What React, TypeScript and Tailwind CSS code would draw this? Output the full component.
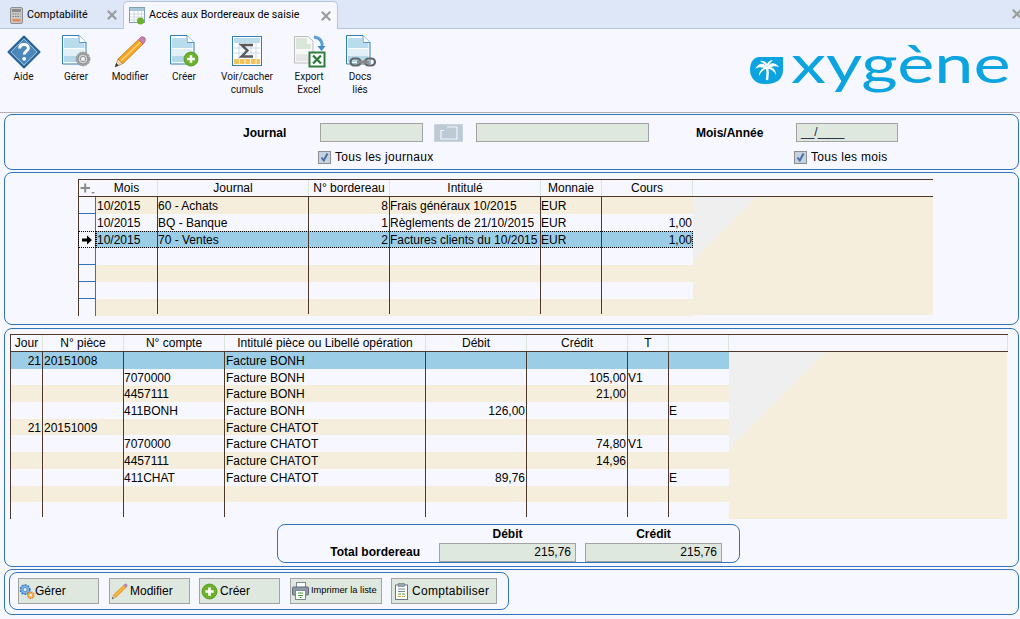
import React from "react";

const Doc = () => (
  <g>
    <path d="M3.5 .5H20L27 7.5V29H3.5Z" fill="#fdfeff" stroke="#2f7fb5" />
    <path d="M20 .5V7.5H27" fill="#fff" stroke="#2f7fb5" strokeWidth=".8" />
    <rect x="5" y="3" width="14" height="5" fill="#b8dcec" />
    <rect x="5" y="8" width="20.5" height="5" fill="#b8dcec" />
    <rect x="5" y="14" width="20.5" height="7" fill="#e3f0f7" />
    <rect x="5" y="21" width="20.5" height="6" fill="#b3d8ea" />
  </g>
);

const Plus = ({ cx, cy, r }: { cx: number; cy: number; r: number }) => (
  <g>
    <circle cx={cx} cy={cy} r={r} fill="#6cb12a" stroke="#4d8f1c" strokeWidth=".8" />
    <path d={`M${cx - r * 0.55} ${cy}H${cx + r * 0.55}M${cx} ${cy - r * 0.55}V${cy + r * 0.55}`} stroke="#fff" strokeWidth={r * 0.36} />
  </g>
);

const Ic = ({ children }: { children: React.ReactNode }) => (
  <svg width="34" height="34" viewBox="0 0 34 34" className="block">
    {children}
  </svg>
);

const HelpIcon = () => (
  <Ic>
    <path d="M17 1.5L32.5 17L17 32.5L1.5 17Z" fill="#4d86b9" stroke="#2a6596" strokeWidth="2" strokeLinejoin="round" />
    <path d="M17 4L30 17L17 30L4 17Z" fill="none" stroke="#a8cbe4" strokeWidth=".8" />
    <path d="M12.6 13.5C12.8 10.8 14.6 9.5 17 9.5C19.6 9.5 21.4 11 21.4 13.2C21.4 16.2 17.2 16.2 17.2 19.6" fill="none" stroke="#fff" strokeWidth="3" />
    <circle cx="17.2" cy="23.8" r="1.9" fill="#fff" />
  </Ic>
);

const Gear = ({ cx, cy, r }: { cx: number; cy: number; r: number }) => (
  <g>
    <circle cx={cx} cy={cy} r={r} fill="#a8a8a8" stroke="#777" strokeWidth=".6" strokeDasharray="2 1.2" />
    <circle cx={cx} cy={cy} r={r * 0.72} fill="#d0d0d0" stroke="#777" strokeWidth=".8" />
    <circle cx={cx} cy={cy} r={r * 0.36} fill="#f7f8ff" stroke="#777" strokeWidth=".8" />
  </g>
);

const GearDocIcon = () => (
  <Ic>
    <Doc />
    <Gear cx={24} cy={24} r={7} />
  </Ic>
);

const PencilGlyph = () => (
  <g>
    <path d="M2 32L5 24L10 28.5Z" fill="#f0d9a8" stroke="#8a6a3a" strokeWidth=".6" />
    <path d="M2 32L3.2 28L5.8 30.4Z" fill="#3b3b3b" />
    <path d="M5 24L25.500 4.500L30 9L10 28.5Z" fill="#f6a821" stroke="#b87412" strokeWidth=".8" />
    <path d="M7.800 26L27.800 6.700" stroke="#ffd27a" strokeWidth="1.400" />
    <path d="M25.500 4.500L28 2Q30 1 32 3Q33 5 31.500 7.500L30 9Z" fill="#c97fb3" stroke="#96608a" strokeWidth=".7" />
  </g>
);

const PencilIcon = () => (
  <Ic>
    <PencilGlyph />
  </Ic>
);

const CreateIcon = () => (
  <Ic>
    <Doc />
    <Plus cx={24} cy={24} r={7} />
  </Ic>
);

const SigmaIcon = () => (
  <Ic>
    <rect x="2.5" y="1.5" width="29" height="29" fill="#fff" stroke="#2f7fb5" />
    <rect x="4" y="3" width="26" height="5" fill="#bcdcec" />
    <path d="M4 13H30M4 18H30M9 8V24M15 8V24M21 8V24M26 8V24" stroke="#c4d8ea" strokeWidth="1" />
    <rect x="4" y="24" width="26" height="5" fill="#f6c25a" />
    <path d="M9.5 24V29M15 24V29M20.5 24V29M26 24V29" stroke="#fff" strokeWidth=".8" />
    <path d="M23 10H11.5L17.5 15.5L11.5 21.5H23" fill="none" stroke="#5a5a5a" strokeWidth="2.4" />
  </Ic>
);

const ExcelIcon = () => (
  <Ic>
    <path d="M2.5 1.5H16L21 6V28H2.5Z" fill="#f8f8f8" stroke="#bdbdbd" />
    <rect x="4" y="3" width="11" height="6" fill="#dbe6da" />
    <rect x="4" y="9" width="15" height="5" fill="#dbe6da" />
    <rect x="4" y="19" width="13" height="7" fill="#e6e6e6" />
    <path d="M22 2C29 3 31 8 30 12" fill="none" stroke="#5a9fd4" strokeWidth="3" />
    <path d="M25.5 11H33.5L29.5 16Z" fill="#3d8cc9" />
    <rect x="17.5" y="17.5" width="15" height="14" fill="#fff" stroke="#2f7d3c" strokeWidth="2" />
    <path d="M21 20.5L29 28.5M29 20.5L21 28.5" stroke="#2f7d3c" strokeWidth="2.4" />
  </Ic>
);

const ChainIcon = () => (
  <Ic>
    <Doc />
    <g fill="none">
      <rect x="7.5" y="23.5" width="10" height="7" rx="3.5" stroke="#666" strokeWidth="2.2" />
      <rect x="22" y="23.5" width="10" height="7" rx="3.5" stroke="#666" strokeWidth="2.2" />
      <path d="M14 27H26" stroke="#888" strokeWidth="3" />
    </g>
  </Ic>
);

const ToolItem = ({ w, icon, lines }: { w: string; icon: React.ReactNode; lines: string[] }) => (
  <div className={`${w} flex flex-col items-center`}>
    <div className="h-[35px]">{icon}</div>
    {lines.map((l) => (
      <div key={l} className="h-[13px] text-[10px] leading-[13px] whitespace-nowrap text-[#111111]">
        {l}
      </div>
    ))}
  </div>
);

const Close = () => (
  <svg width="10" height="10" viewBox="0 0 10 10" className="block shrink-0">
    <path d="M.8 .8L9.2 9.2M9.2 .8L.8 9.2" stroke="#9b9b9b" strokeWidth="2.2" />
  </svg>
);

const Logo = () => (
  <svg width="262" height="56" viewBox="0 0 262 56" className="block">
    <path d="M9 15H33V28C33 37 26 42 17 42H14C6 42 0 36 0 28C0 20 4 15 9 15Z" fill="#0ba3e0" />
    <path d="M17 38C18 33 18 29 17 25" stroke="#fff" strokeWidth="2.4" fill="none" />
    <path d="M17 25C13 20 9 21 5 27C8 25 11 25 14 26C11 27 9 30 9 34C11 30 13 28 16.500 26.500Z" fill="#fff" />
    <path d="M17 25C20 20 25 20 29 25C26 24 23 24 21 25.500C24 26 26 29 26 33C24 29 21 27 17.500 26.500Z" fill="#fff" />
    <path d="M17 25C15 22 13 21 10 19C13 18 16 20 17 22C18 20 20 18 23 18C21 20 19 22 17 25Z" fill="#fff" />
    <text transform="translate(41 41) scale(1.35 1)" fontFamily="Lato, 'Liberation Sans', sans-serif" fontSize="52" fill="#0ba3e0">
      xygène
    </text>
  </svg>
);

const Check = () => (
  <div className="w-[13px] h-[13px] border border-[#8f8f8f] bg-[#c6d2e0] shrink-0 flex items-center justify-center">
    <svg width="11" height="11" viewBox="0 0 11 11" className="block">
      <path d="M2.500 5.500L4.800 8.500L8.500 1.500" fill="none" stroke="#4a6fa5" strokeWidth="2" />
    </svg>
  </div>
);

const Field = ({ w, children }: { w: string; children?: React.ReactNode }) => (
  <div className={`${w} h-[19px] border border-[#a3a3a3] bg-[#dfe8df] text-[12px] leading-[17px] px-[4px] whitespace-nowrap`}>{children}</div>
);

type Col = { w: string; align?: "r"; tight?: boolean };

const Cell = ({ col, text, short, sep, first }: { col: Col; text?: string; short: boolean; sep: boolean; first?: boolean }) => (
  <div className={`${col.w} shrink-0 flex items-start h-full`}>
    {first && <div className="w-px bg-[#4d392c] shrink-0 h-full" />}
    <span className={`flex-1 min-w-0 pt-[1px] overflow-hidden whitespace-nowrap ${col.align === "r" ? "text-right pr-[1px]" : col.tight ? "text-left" : "text-left pl-[1px]"}`}>{text}</span>
    {sep && <div className={`w-px bg-[#4d392c] shrink-0 ${short ? "h-[15px]" : "h-full"}`} />}
  </div>
);

const HeadCell = ({ w, label, sep = true }: { w: string; label: string; sep?: boolean }) => (
  <div className={`${w} shrink-0 flex h-full`}>
    <span className="flex-1 min-w-0 text-center whitespace-nowrap">{label}</span>
    {sep && <div className="w-px bg-[#dbe6dc] h-full shrink-0" />}
  </div>
);

const cols1: Col[] = [
  { w: "w-[62px]" },
  { w: "w-[151px]", tight: true },
  { w: "w-[81px]", align: "r" },
  { w: "w-[151px]", tight: true },
  { w: "w-[61px]", tight: true },
  { w: "w-[91px]", align: "r" },
];
const heads1 = ["Mois", "Journal", "N° bordereau", "Intitulé", "Monnaie", "Cours"];
const rows1: string[][] = [
  ["10/2015", "60 - Achats", "8", "Frais généraux 10/2015", "EUR", ""],
  ["10/2015", "BQ - Banque", "1", "Règlements de 21/10/2015", "EUR", "1,00"],
  ["10/2015", "70 - Ventes", "2", "Factures clients du 10/2015", "EUR", "1,00"],
  [],
  [],
  [],
  [],
];

const cols2: Col[] = [
  { w: "w-[33px]", align: "r" },
  { w: "w-[81px]" },
  { w: "w-[101px]", tight: true },
  { w: "w-[201px]" },
  { w: "w-[101px]", align: "r" },
  { w: "w-[101px]", align: "r" },
  { w: "w-[41px]", tight: true },
  { w: "w-[60px]", tight: true },
];
const heads2 = ["Jour", "N° pièce", "N° compte", "Intitulé pièce ou Libellé opération", "Débit", "Crédit", "T", ""];
const rows2: string[][] = [
  ["21", "20151008", "", "Facture BONH", "", "", "", ""],
  ["", "", "7070000", "Facture BONH", "", "105,00", "V1", ""],
  ["", "", "4457111", "Facture BONH", "", "21,00", "", ""],
  ["", "", "411BONH", "Facture BONH", "126,00", "", "", "E"],
  ["21", "20151009", "", "Facture CHATOT", "", "", "", ""],
  ["", "", "7070000", "Facture CHATOT", "", "74,80", "V1", ""],
  ["", "", "4457111", "Facture CHATOT", "", "14,96", "", ""],
  ["", "", "411CHAT", "Facture CHATOT", "89,76", "", "", "E"],
  [],
  [],
];

const PlusHeader = () => (
  <svg width="17" height="16" viewBox="0 0 17 16" className="block">
    <path d="M1.500 8H11M6.200 3.500V12.500" stroke="#8c8c8c" strokeWidth="2" />
    <path d="M12 12H16L14 14Z" fill="#8c8c8c" />
  </svg>
);

const Arrow = () => (
  <svg width="12" height="10" viewBox="0 0 12 10" className="block">
    <path d="M1 3.500H6V.5L11 5L6 9.500V6.500H1Z" fill="#000" />
  </svg>
);

const Grid1 = () => (
  <div className="w-[855px] text-[12px] leading-[17px] text-black">
    <div className="flex h-[18px] border-y border-[#4d392c] leading-[16px]">
      <div className="w-[18px] shrink-0 border-l border-[#4d392c]">
        <PlusHeader />
      </div>
      {heads1.map((h, i) => (
        <HeadCell key={h} w={cols1[i].w} label={h} />
      ))}
    </div>
    <div className="flex">
      <div className="w-[615px]">
        {rows1.map((r, i) => {
          const selected = i === 2;
          const bg = selected ? "bg-[#9ccde7]" : i % 2 === 0 ? "bg-[#f6eedd]" : "bg-[#f7f8ff]";
          const last = i === rows1.length - 1;
          const line = i === 0 || i === 3 || i === 4 || i === 5;
          return (
            <div key={i} className="flex h-[17px]">
              <div
                className={`w-[18px] shrink-0 border-l border-r border-l-[#4d392c] border-r-[#2f74bc] flex items-center justify-center ${
                  line ? "border-b border-b-[#2f74bc]" : ""
                } ${selected ? "outline-1 outline-dotted -outline-offset-1 outline-black" : ""}`}
              >
                {selected && <Arrow />}
              </div>
              <div className={`flex h-full overflow-hidden ${bg} ${selected ? "outline-1 outline-dotted -outline-offset-1 outline-black" : ""}`}>
                {cols1.map((c, j) => (
                  <Cell key={j} col={c} text={r[j]} short={last} sep={j < 5} />
                ))}
              </div>
            </div>
          );
        })}
      </div>
      <div className="w-[240px] h-[118px] bg-[linear-gradient(135deg,#efefef_45px,#f6eedd_45px)]" />
    </div>
  </div>
);

const Grid2 = () => (
  <div className="w-[998px] text-[12px] leading-[17px] text-black">
    <div className="flex h-[18px] border-y border-[#4d392c] leading-[16px]">
      {heads2.map((h, i) => (
        <div key={i} className={`${cols2[i].w} shrink-0 flex h-full ${i === 0 ? "border-l border-[#4d392c]" : ""}`}>
          <span className="flex-1 min-w-0 text-center whitespace-nowrap">{h}</span>
          <div className="w-px bg-[#dbe6dc] h-full shrink-0" />
        </div>
      ))}
      <div className="flex-1 border-r border-[#dbe6dc]" />
    </div>
    <div className="flex">
      <div className="w-[719px]">
        {rows2.map((r, i) => {
          const bg = i === 0 ? "bg-[#9ccde7]" : i % 2 === 0 ? "bg-[#f6eedd]" : "bg-[#f7f8ff]";
          const last = i === rows2.length - 1;
          return (
            <div key={i} className={`flex h-[16.7px] ${bg}`}>
              {cols2.map((c, j) => (
                <Cell key={j} col={c} text={r[j]} short={last} sep={j < 7} first={j === 0} />
              ))}
            </div>
          );
        })}
      </div>
      <div className="w-[278px] h-[167px] bg-[linear-gradient(135deg,#efefef_68px,#f6eedd_68px)]" />
    </div>
  </div>
);

const GearsSmall = () => (
  <svg width="16" height="17" viewBox="0 0 17 17" className="block shrink-0">
    <circle cx="6.500" cy="6.500" r="5" fill="#7fb2de" stroke="#2f74bc" strokeWidth="1.600" strokeDasharray="2 1.200" />
    <circle cx="6.500" cy="6.500" r="2" fill="#f7f8ff" stroke="#2f74bc" strokeWidth=".7" />
    <circle cx="12.500" cy="12.500" r="3.400" fill="#f3b04e" stroke="#d9822b" strokeWidth="1.300" strokeDasharray="1.600 1" />
    <circle cx="12.500" cy="12.500" r="1.300" fill="#f7f8ff" />
  </svg>
);

const PencilSmall = () => (
  <svg width="17" height="17" viewBox="0 0 34 34" className="block shrink-0">
    <PencilGlyph />
  </svg>
);

const PlusSmall = () => (
  <svg width="17" height="17" viewBox="0 0 17 17" className="block shrink-0">
    <Plus cx={8.5} cy={8.5} r={7.5} />
  </svg>
);

const PrinterSmall = () => (
  <svg width="17" height="18" viewBox="0 0 17 18" className="block shrink-0">
    <rect x="4.500" y=".5" width="9" height="5" fill="#fff" stroke="#7a8794" />
    <rect x=".5" y="5" width="16" height="8" rx="1" fill="#8d99a6" stroke="#5e6b78" />
    <rect x="3.500" y="8.500" width="10" height="9" fill="#fff" stroke="#7a8794" />
    <path d="M6 11H11M6 13.500H11" stroke="#4d9a3a" strokeWidth="1" />
    <path d="M7.500 15.500H9.500" stroke="#4d9a3a" strokeWidth="1" />
  </svg>
);

const ClipboardSmall = () => (
  <svg width="13" height="17" viewBox="0 0 13 17" className="block shrink-0">
    <rect x=".5" y="2" width="12" height="14.500" fill="#fff" stroke="#6c7680" />
    <rect x="3.500" y=".5" width="6" height="3" fill="#9aa5b0" stroke="#6c7680" strokeWidth=".6" />
    <path d="M3 6H10M3 8.500H10" stroke="#7a8794" />
    <path d="M3 11H6M7 11H10" stroke="#5d9e46" />
    <path d="M3 13.500H6M7 13.500H10" stroke="#d9a13c" />
  </svg>
);

const Btn = ({ w, ml, gap, pl, icon, children }: { w: string; ml: string; gap: string; pl: string; icon: React.ReactNode; children: React.ReactNode }) => (
  <div className={`${w} ${ml} ${gap} ${pl} h-[26px] shrink-0 border border-[#a3a3a3] bg-[#dfe8df] flex items-center whitespace-nowrap`}>
    {icon}
    {children}
  </div>
);

const Panel = ({ h, children, extra = "" }: { h: string; children: React.ReactNode; extra?: string }) => (
  <div className={`${h} border border-[#2f74bc] rounded-[8px] ${extra}`}>{children}</div>
);

export default function App() {
  return (
    <div className="w-[1020px] h-[619px] overflow-hidden bg-[#f7f8ff] text-black [font-family:Liberation_Sans,Arial,sans-serif]">
      {/* tabs */}
      <div className="h-[29px] bg-[#dee7f7] border-b border-[#b7c6da] flex items-end [font-family:Roboto,sans-serif] text-[10.7px]">
        <div className="w-[122px] h-[26px] flex items-center pl-[10px] pr-[5px]">
          <svg width="13" height="17" viewBox="0 0 13 17" className="block shrink-0">
            <rect x=".5" y=".5" width="12" height="16" rx="1.500" fill="#c9c9c9" stroke="#8d8d8d" />
            <rect x="2" y="2" width="9" height="3" fill="#8b8b8b" />
            <path d="M2.500 7H10.500M2.500 9.500H10.500" stroke="#7d7d7d" strokeWidth="1.200" strokeDasharray="1.500 1" />
            <rect x="2.500" y="12" width="8" height="2.500" fill="#e58a55" />
          </svg>
          <span className="ml-[4px] flex-1 whitespace-nowrap">Comptabilité</span>
          <Close />
        </div>
        <div className="w-[215px] h-[28px] -mb-px ml-px bg-[#f7f8ff] border border-b-0 border-[#b7c6da] rounded-t-[5px] flex items-center pl-[5px] pr-[6px]">
          <svg width="17" height="18" viewBox="0 0 17 18" className="block shrink-0">
            <rect x=".5" y=".5" width="15" height="15" fill="#fff" stroke="#7f9fb8" />
            <rect x="1" y="1" width="14" height="3" fill="#a9c7da" />
            <path d="M1 7H15M1 10H15M1 13H15M5 4V15M9 4V15M12.500 4V15" stroke="#c5d0d8" strokeWidth=".8" />
            <circle cx="11.500" cy="14" r="3.500" fill="#6cb12a" />
          </svg>
          <span className="ml-[3px] flex-1 whitespace-nowrap">Accès aux Bordereaux de saisie</span>
          <Close />
        </div>
        <div className="flex-1 h-[26px] flex items-center justify-end -mr-[2px] pb-[3px]">
          <Close />
        </div>
      </div>

      {/* toolbar */}
      <div className="h-[84px] border-b border-[#b3aeb6] flex items-start pt-[6px] [font-family:Roboto,sans-serif]">
        <ToolItem w="w-[47px]" icon={<HelpIcon />} lines={["Aide"]} />
        <ToolItem w="w-[58px]" icon={<GearDocIcon />} lines={["Gérer"]} />
        <ToolItem w="w-[50px]" icon={<PencilIcon />} lines={["Modifier"]} />
        <ToolItem w="w-[58px]" icon={<CreateIcon />} lines={["Créer"]} />
        <ToolItem w="w-[68px]" icon={<SigmaIcon />} lines={["Voir/cacher", "cumuls"]} />
        <ToolItem w="w-[56px]" icon={<ExcelIcon />} lines={["Export", "Excel"]} />
        <ToolItem w="w-[46px]" icon={<ChainIcon />} lines={["Docs", "liés"]} />
        <div className="ml-auto mr-[8px] mt-[7px]">
          <Logo />
        </div>
      </div>

      {/* panels */}
      <div className="pt-[1px] pl-[4px] pr-[1px] flex flex-col">
        <Panel h="h-[56px]" extra="pt-[8px]">
          <div className="flex items-center text-[12px] pl-[238px]">
            <span className="w-[77px] font-bold">Journal</span>
            <Field w="w-[103px]" />
            <div className="w-[29px] h-[18px] ml-[11px] bg-[#bccad6] border border-[#c9d3dc] flex items-center justify-center">
              <svg width="22" height="14" viewBox="0 0 22 14" className="block">
                <path d="M9 1H19V13H3V4.500L6 4.500" fill="none" stroke="#f4f6f8" strokeWidth="1.200" />
              </svg>
            </div>
            <Field w="w-[173px] ml-[13px]" />
            <span className="w-[100px] ml-[47px] font-bold">Mois/Année</span>
            <Field w="w-[102px]">
              <span className="text-[#14233c]">__/____</span>
            </Field>
          </div>
          <div className="flex items-center text-[12px] mt-[6px] pl-[313px]">
            <Check />
            <span className="ml-[4px] w-[459px] tracking-[0.3px]">Tous les journaux</span>
            <Check />
            <span className="ml-[4px] tracking-[0.3px]">Tous les mois</span>
          </div>
        </Panel>
        <Panel h="h-[153px] mt-[2px]" extra="pt-[6px] pl-[73px]">
          <Grid1 />
        </Panel>
        <Panel h="h-[239px] mt-[3px]" extra="pt-[5px] pl-[5px]">
          <Grid2 />
          <div className="ml-[267px] mt-[5px] w-[463px] h-[39px] border border-[#2f74bc] rounded-[8px] text-[12px] font-bold grid grid-cols-[152px_137px_137px] gap-x-[9px] pt-[2px] leading-[15px]">
            <span />
            <span className="text-center">Débit</span>
            <span className="text-center">Crédit</span>
            <span className="text-right leading-[19px] mt-[1px] pr-[10px]">Total bordereau</span>
            <div className="mt-[1px] h-[19px] border border-[#a3a3a3] bg-[#dfe8df] font-normal text-right leading-[17px] px-[4px]">
              215,76
            </div>
            <div className="mt-[1px] h-[19px] border border-[#a3a3a3] bg-[#dfe8df] font-normal text-right leading-[17px] px-[4px]">
              215,76
            </div>
          </div>
        </Panel>
        <Panel h="h-[46px] mt-[2px]" extra="pt-[2px] pl-[4px]">
          <div className="w-[500px] h-[38px] border border-[#2f74bc] rounded-[8px] flex items-center pl-[8px] text-[12px]">
            <Btn w="w-[81px]" ml="" gap="gap-[0px]" pl="pl-[0px]" icon={<GearsSmall />}>Gérer</Btn>
            <Btn w="w-[81px]" ml="ml-[10px]" gap="gap-[2px]" pl="pl-[1px]" icon={<PencilSmall />}>Modifier</Btn>
            <Btn w="w-[81px]" ml="ml-[9px]" gap="gap-[2px]" pl="pl-[1px]" icon={<PlusSmall />}>Créer</Btn>
            <Btn w="w-[92px]" ml="ml-[10px]" gap="gap-[2px]" pl="pl-[1px]" icon={<PrinterSmall />}>
              <span className="text-[9.3px]">Imprimer la liste</span>
            </Btn>
            <Btn w="w-[106px]" ml="ml-[9px]" gap="gap-[4px]" pl="pl-[3px]" icon={<ClipboardSmall />}>
              <span className="tracking-[0.3px]">Comptabiliser</span>
            </Btn>
          </div>
        </Panel>
      </div>
    </div>
  );
}
